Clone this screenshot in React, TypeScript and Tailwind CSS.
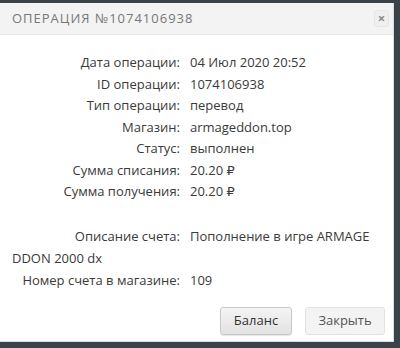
const rows: [string, string][] = [
  ["Дата операции:", "04 Июл 2020 20:52"],
  ["ID операции:", "1074106938"],
  ["Тип операции:", "перевод"],
  ["Магазин:", "armageddon.top"],
  ["Статус:", "выполнен"],
  ["Сумма списания:", "20.20 ₽"],
  ["Сумма получения:", "20.20 ₽"],
];

function Row({ label, value }: { label: string; value: string }) {
  return (
    <div className="leading-[21.5px]">
      <span className="mr-[10px] inline-block w-[168px] text-right">{label}</span>
      {value}
    </div>
  );
}

export default function App() {
  return (
    <div
      className="h-[348px] w-[400px] bg-[#3b4248] pt-[3px] pr-[6px] text-[13px] text-[#3a3a3a]"
      style={{ fontFamily: '"Open Sans", "DejaVu Sans", sans-serif' }}
    >
      <div className="flex h-[339px] flex-col border-r border-b border-[#d5dbde] bg-white">
        <div className="flex h-[32px] items-center justify-between border-b border-[#e8e8e8] bg-[#f3f3f3] pl-[12px] pr-[4px]">
          <span className="text-[13px] tracking-[1px] text-[#777]">ОПЕРАЦИЯ №1074106938</span>
          <button className="flex h-[17px] w-[15px] items-center justify-center rounded-[3px] border border-[#e6e6e6] bg-[#efefef] text-[13px] font-bold leading-none text-[#888]">
            ×
          </button>
        </div>
        <div className="pl-[12px] pr-[20px] pt-[17px]">
          {rows.map(([l, v]) => (
            <Row key={l} label={l} value={v} />
          ))}
          <div className="mt-[22px] break-all leading-[22px]">
            <span className="mr-[10px] inline-block w-[168px] text-right">Описание счета:</span>
            Пополнение в игре ARMAGEDDON 2000 dx
          </div>
          <div className="leading-[22px]">
            <span className="mr-[10px] inline-block w-[168px] text-right">Номер счета в магазине:</span>
            109
          </div>
        </div>
        <div className="mt-auto flex justify-end gap-[13px] pb-[6px] pr-[8px]">
          <button className="h-[28px] w-[72px] rounded-[3px] border border-[#c8c8c8] bg-gradient-to-b from-[#f4f4f4] to-[#e2e2e2] text-[13px] text-[#333] shadow-[0_1px_1px_rgba(0,0,0,0.1)]">
            Баланс
          </button>
          <button className="h-[28px] w-[80px] rounded-[3px] border border-[#e2e2e2] bg-[#f3f3f3] text-[13px] text-[#555]">
            Закрыть
          </button>
        </div>
      </div>
    </div>
  );
}
